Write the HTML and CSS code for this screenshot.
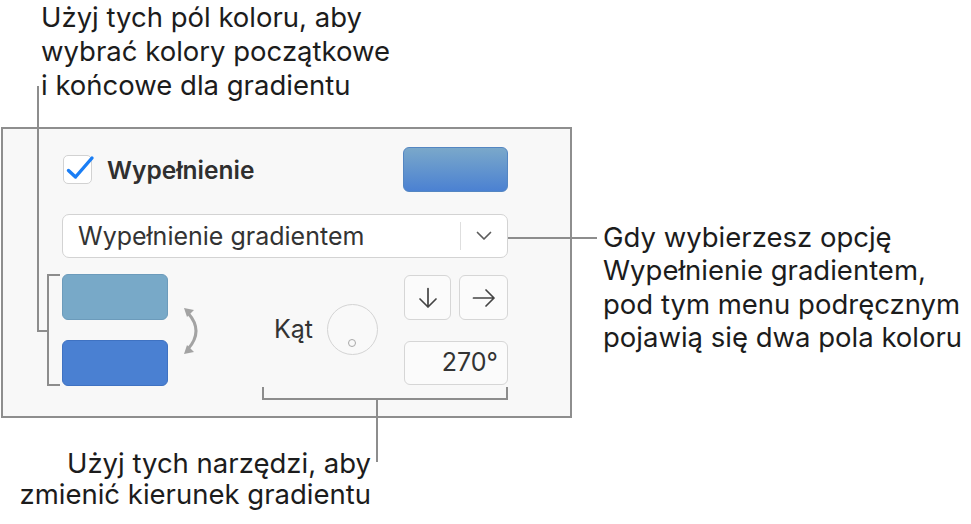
FILE: index.html
```html
<!DOCTYPE html>
<html lang="pl">
<head>
    <meta charset="UTF-8">
    <meta name="viewport" content="width=device-width, initial-scale=1.0">
    <title>Wypełnienie gradientem</title>
    <link rel="stylesheet" href="styles.css">
</head>
<body>
    <div class="figure">
        <p class="note note-top">Użyj tych pól koloru, aby<br>wybrać kolory początkowe<br>i końcowe dla gradientu</p>

        <div class="figure-row">
            <section class="panel">
                <div class="fill-row">
                    <label class="check">
                        <span class="check-box">
                            <svg width="30" height="30" viewBox="0 0 30 30">
                                <path d="M5.5 15.5 L12.5 22 L29 3" fill="none" stroke="#1a7ef5" stroke-width="3.4" stroke-linecap="round" stroke-linejoin="round"/>
                            </svg>
                        </span>
                        <span class="check-label">Wypełnienie</span>
                    </label>
                    <div class="well well-gradient"></div>
                </div>

                <div class="select">
                    <span class="select-text">Wypełnienie gradientem</span>
                    <span class="select-arrow">
                        <svg width="16" height="10" viewBox="0 0 16 10">
                            <path d="M1.5 1.5 L8 8 L14.5 1.5" fill="none" stroke="#5c5c5c" stroke-width="1.7" stroke-linecap="round" stroke-linejoin="round"/>
                        </svg>
                    </span>
                </div>

                <div class="gradient-row">
                    <div class="wells">
                        <div class="well well-start"></div>
                        <div class="well well-end"></div>
                    </div>

                    <!-- swap start/end colours -->
                    <svg class="swap" width="22" height="48" viewBox="0 0 22 48">
                        <path d="M5 6 Q21 24 5 42" fill="none" stroke="#a3a3a3" stroke-width="3"/>
                        <path d="M1 1 L11 3 L4 10 Z" fill="#a3a3a3"/>
                        <path d="M1 47 L11 45 L4 38 Z" fill="#a3a3a3"/>
                    </svg>

                    <div class="angle">
                        <span class="angle-label">Kąt</span>
                        <div class="dial"><span class="dial-dot"></span></div>
                    </div>

                    <div class="direction">
                        <button class="dir-btn" type="button">
                            <svg width="20" height="22" viewBox="0 0 20 22">
                                <path d="M10 1.5 V20 M2 12 L10 20 L18 12" fill="none" stroke="#444" stroke-width="1.7" stroke-linecap="round" stroke-linejoin="round"/>
                            </svg>
                        </button>
                        <button class="dir-btn" type="button">
                            <svg width="24" height="20" viewBox="0 0 24 20">
                                <path d="M1.5 10 H22 M14 2 L22 10 L14 18" fill="none" stroke="#444" stroke-width="1.7" stroke-linecap="round" stroke-linejoin="round"/>
                            </svg>
                        </button>
                        <div class="angle-field">270°</div>
                    </div>
                </div>
            </section>

            <p class="note note-right">Gdy wybierzesz opcję<br>Wypełnienie gradientem,<br>pod tym menu podręcznym<br>pojawią się dwa pola koloru</p>
        </div>

        <p class="note note-bottom">Użyj tych narzędzi, aby<br>zmienić kierunek gradientu</p>

        <!-- callout lines -->
        <div class="line elbow-colors"></div>
        <div class="line bracket-colors"></div>
        <div class="line leader-fill"></div>
        <div class="line bracket-angle"></div>
        <div class="line leader-angle"></div>
    </div>
</body>
</html>
```

FILE: styles.css
```css
body {
    margin: 0;
    background: #fff;
    font-family: Inter, "Noto Sans", sans-serif;
    color: #1c1c1c;
}
.figure {
    position: relative;
    width: 971px;
    height: 524px;
}
.note {
    margin: 0;
    font-size: 27.5px;
    line-height: 33.4px;
}
.note-top {
    padding-left: 41px;
    line-height: 34px;
}
.figure-row {
    display: flex;
    align-items: flex-start;
    margin-top: 25px;
}
.note-right {
    margin-left: 31px;
    margin-top: 94px;
    white-space: nowrap;
}
.note-bottom {
    width: 371px;
    margin-top: 30px;
    line-height: 31px;
    text-align: right;
}

/* inspector panel */
.panel {
    flex: none;
    box-sizing: border-box;
    width: 571px;
    height: 291px;
    margin-left: 1px;
    padding: 18px 62px 0 59px;
    background: #f8f8f8;
    border: 2px solid #8e8e8e;
    color: #333;
}
.fill-row {
    display: flex;
    align-items: center;
    justify-content: space-between;
    height: 45px;
}
.check {
    display: flex;
    align-items: center;
    gap: 15px;
    margin-left: 1px;
}
.check-box {
    position: relative;
    box-sizing: border-box;
    width: 29px;
    height: 29px;
    background: #fff;
    border: 1.5px solid #d2d2d2;
    border-radius: 5px;
}
.check-box svg {
    position: absolute;
    left: -1px;
    top: -1px;
    overflow: visible;
}
.check-label {
    font-size: 24.5px;
    font-weight: 600;
    color: #2f2f2f;
}
.well {
    box-sizing: border-box;
    width: 106px;
    height: 46px;
    border-radius: 6px;
}
.well-gradient {
    width: 105px;
    height: 45px;
    background: linear-gradient(#7aa8ca, #4b81d2);
    border: 1.5px solid #5486c2;
}
.well-start {
    background: #78a9c8;
    border: 1.5px solid #6c9bbb;
}
.well-end {
    background: #4a80d2;
    border: 1.5px solid #3f72c2;
}

.select {
    display: flex;
    align-items: center;
    box-sizing: border-box;
    height: 44px;
    margin-top: 22px;
    background: #fff;
    border: 1.5px solid #d3d3d3;
    border-radius: 7px;
}
.select-text {
    flex: 1;
    padding-left: 15px;
    font-size: 25px;
    color: #333;
}
.select-arrow {
    display: flex;
    align-items: center;
    justify-content: center;
    width: 46px;
    height: 28px;
    border-left: 1.5px solid #dedede;
}

.gradient-row {
    display: flex;
    align-items: center;
    height: 112px;
    margin-top: 16px;
}
.wells {
    display: flex;
    flex-direction: column;
    gap: 20px;
}
.swap {
    margin-left: 15px;
    margin-top: 2px;
}
.angle {
    display: flex;
    align-items: center;
    gap: 14px;
    margin-left: 69px;
    margin-top: -2px;
}
.angle-label {
    font-size: 25px;
    color: #333;
}
.dial {
    position: relative;
    box-sizing: border-box;
    width: 51px;
    height: 51px;
    border: 1.5px solid #d4d4d4;
    border-radius: 50%;
    background: #f9f9f9;
}
.dial-dot {
    position: absolute;
    left: 20px;
    top: 34px;
    box-sizing: border-box;
    width: 8px;
    height: 8px;
    border: 1.5px solid #a8a8a8;
    border-radius: 50%;
}
.direction {
    display: grid;
    grid-template-columns: 47px 49px;
    grid-template-rows: 45px 44px;
    column-gap: 8px;
    row-gap: 21px;
    margin-left: auto;
    align-self: flex-start;
    margin-top: 1px;
}
.dir-btn {
    display: flex;
    align-items: center;
    justify-content: center;
    padding: 0;
    background: #fbfbfb;
    border: 1.5px solid #d6d6d6;
    border-radius: 6px;
}
.angle-field {
    grid-column: 1 / 3;
    box-sizing: border-box;
    padding-right: 9px;
    background: #fbfbfb;
    border: 1.5px solid #d6d6d6;
    border-radius: 6px;
    font-size: 25px;
    line-height: 41px;
    text-align: right;
    color: #333;
}

/* callout lines */
.line {
    position: absolute;
    box-sizing: border-box;
    border: 0 solid #8d8d8d;
}
.elbow-colors {
    left: 37px;
    top: 86px;
    width: 11px;
    height: 246px;
    border-left-width: 2px;
    border-bottom-width: 2px;
}
.bracket-colors {
    left: 47px;
    top: 274px;
    width: 13px;
    height: 112px;
    border-width: 2px 0 2px 2px;
}
.leader-fill {
    left: 508px;
    top: 237px;
    width: 89px;
    height: 2px;
    background: #8d8d8d;
}
.bracket-angle {
    left: 262px;
    top: 387px;
    width: 246px;
    height: 13px;
    border-width: 0 2px 2px 2px;
}
.leader-angle {
    left: 376px;
    top: 399px;
    width: 2px;
    height: 63px;
    background: #8d8d8d;
}
```
